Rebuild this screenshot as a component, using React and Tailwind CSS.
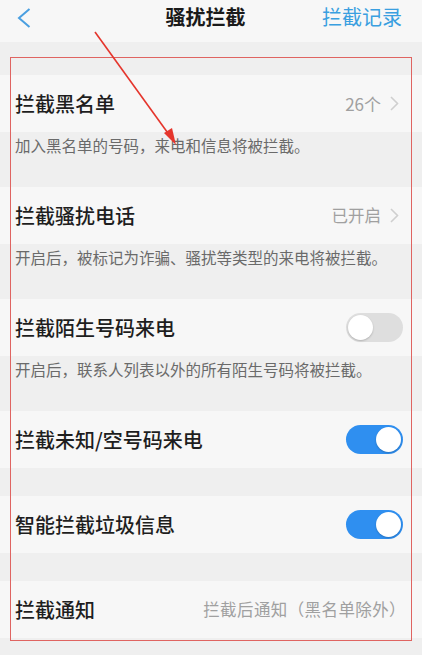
import React from "react";

const Chevron = () => (
  <svg width="9" height="15" viewBox="0 0 9 15" className="ml-[9px] mr-[4px]">
    <polyline points="1,1 7.5,7.5 1,14" fill="none" stroke="#cfcfcf" strokeWidth="1.6" />
  </svg>
);

const Toggle = ({ on }) => (
  <div
    className={`w-[57px] h-[29px] rounded-full p-[2px] flex items-center ${
      on ? "bg-[#2f8ff0] justify-end" : "bg-[#dedede] justify-start"
    }`}
  >
    <div className="w-[25px] h-[25px] rounded-full bg-white shadow-[0_1px_2px_rgba(0,0,0,0.2)]" />
  </div>
);

const Row = ({ title, right }) => (
  <div className="h-[57px] bg-[#f7f7f7] pl-[15px] pr-[19px] flex items-center justify-between">
    <span className="text-[20px] font-medium text-[#1e1e1e]">{title}</span>
    {right}
  </div>
);

const Desc = ({ children }) => (
  <div className="h-[27px] px-[15px] flex items-center text-[15.5px] text-[#6a6a6a] whitespace-nowrap">
    {children}
  </div>
);

export default function App() {
  return (
    <div
      className="relative w-[422px] h-[655px] bg-[#efefef] overflow-hidden"
      style={{ fontFamily: '"Noto Sans CJK SC", "Noto Sans", sans-serif' }}
    >
      {/* header */}
      <div className="h-[42px] bg-[#f7f7f7] flex items-start justify-between pl-[17px] pr-[20px] pt-[4px]">
        <svg width="14" height="20" viewBox="0 0 14 20" className="mt-[4px]">
          <polyline points="12.5,1 2,10 12.5,19" fill="none" stroke="#4a9fe0" strokeWidth="2" />
        </svg>
        <span className="text-[20px] font-bold text-[#1a1a1a] leading-[26px] ml-[58px]">骚扰拦截</span>
        <span className="text-[20px] text-[#3a9fe0] leading-[26px]">拦截记录</span>
      </div>

      <div className="h-[33px]" />

      <Row
        title="拦截黑名单"
        right={
          <div className="flex items-center text-[17px] text-[#a0a0a0]">
            26个
            <Chevron />
          </div>
        }
      />
      <Desc>加入黑名单的号码，来电和信息将被拦截。</Desc>
      <div className="h-[28px]" />

      <Row
        title="拦截骚扰电话"
        right={
          <div className="flex items-center text-[16.5px] text-[#a0a0a0]">
            已开启
            <Chevron />
          </div>
        }
      />
      <Desc>开启后，被标记为诈骗、骚扰等类型的来电将被拦截。</Desc>
      <div className="h-[28px]" />

      <Row title="拦截陌生号码来电" right={<Toggle on={false} />} />
      <Desc>开启后，联系人列表以外的所有陌生号码将被拦截。</Desc>
      <div className="h-[28px]" />

      <Row title="拦截未知/空号码来电" right={<Toggle on />} />
      <div className="h-[28px]" />

      <Row title="智能拦截垃圾信息" right={<Toggle on />} />
      <div className="h-[28px]" />

      <Row
        title="拦截通知"
        right={<span className="text-[16.5px] text-[#a0a0a0] -mr-[3px] tracking-[0.4px]">拦截后通知（黑名单除外）</span>}
      />

      {/* annotation */}
      <div className="absolute top-[57px] left-[10px] w-[402px] h-[584px] border-[1.5px] border-[#df6461] pointer-events-none" />
      <svg className="absolute top-0 left-0 pointer-events-none" width="422" height="655">
        <line x1="95" y1="32" x2="170" y2="136" stroke="#e5352c" strokeWidth="1.6" />
        <polygon points="176,145 164,133 172,128" fill="#e5352c" />
      </svg>
    </div>
  );
}
